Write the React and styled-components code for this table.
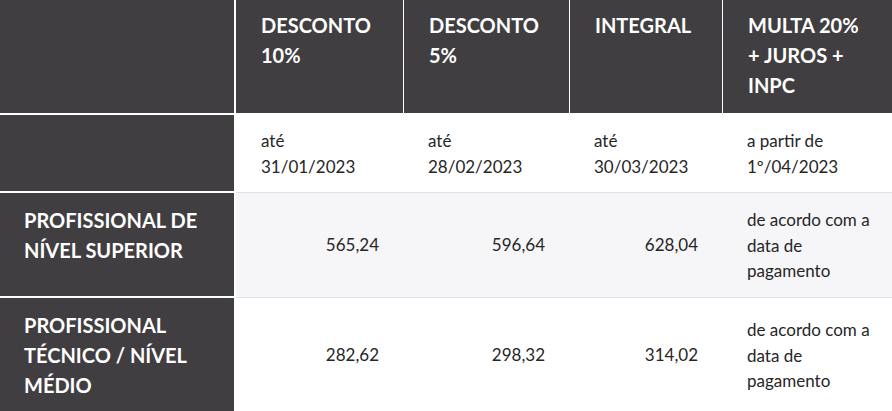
import React from "react";
import styled, { createGlobalStyle } from "styled-components";

const GlobalStyle = createGlobalStyle`
  body {
    margin: 0;
    background: #fff;
    font-family: Lato, "Open Sans", "Liberation Sans", sans-serif;
  }
`;

const DARK = "#403e41";

const widths = [236, 167, 166, 153, 170];

const columns = [
  { title: "DESCONTO 10%", date: ["até", "31/01/2023"] },
  { title: "DESCONTO 5%", date: ["até", "28/02/2023"] },
  { title: "INTEGRAL", date: ["até", "30/03/2023"] },
  { title: "MULTA 20% + JUROS + INPC", date: ["a partir de", "1º/04/2023"] },
];

const rows = [
  {
    label: "PROFISSIONAL DE NÍVEL SUPERIOR",
    values: ["565,24", "596,64", "628,04"],
    shade: true,
  },
  {
    label: "PROFISSIONAL TÉCNICO / NÍVEL MÉDIO",
    values: ["282,62", "298,32", "314,02"],
    shade: false,
  },
];

export default function App() {
  return (
    <>
      <GlobalStyle />
      <PriceTable>
        <colgroup>
          {widths.map((w, i) => (
            <Col key={i} $w={w} />
          ))}
        </colgroup>
        <thead>
          <tr>
            <CornerCell />
            {columns.map((c, i) => (
              <HeadCell key={c.title} $first={i === 0} $last={i === columns.length - 1}>
                {c.title}
              </HeadCell>
            ))}
          </tr>
        </thead>
        <tbody>
          <tr>
            <LabelCell />
            {columns.map((c, i) => (
              <DateCell key={c.date[1]} $last={i === columns.length - 1}>
                {c.date[0]}
                <br />
                {c.date[1]}
              </DateCell>
            ))}
          </tr>
          {rows.map((r) => (
            <tr key={r.label}>
              <LabelCell>{r.label}</LabelCell>
              {r.values.map((v) => (
                <ValueCell key={v} $shade={r.shade}>
                  {v}
                </ValueCell>
              ))}
              <NoteCell $shade={r.shade}>de acordo com a data de pagamento</NoteCell>
            </tr>
          ))}
        </tbody>
      </PriceTable>
    </>
  );
}

const PriceTable = styled.table`
  width: 892px;
  table-layout: fixed;
  border-collapse: separate;
  border-spacing: 0;
`;

const Col = styled.col`
  width: ${(p) => p.$w}px;
`;

const CornerCell = styled.th`
  background: ${DARK};
  border-right: 2px solid #fff;
  border-bottom: 2px solid #fff;
  padding: 0;
`;

const HeadCell = styled.th`
  background: ${DARK};
  color: #fff;
  font-weight: 700;
  font-size: 20px;
  line-height: 30px;
  text-align: left;
  vertical-align: top;
  padding: 10px ${(p) => (p.$last ? "21px" : "24px")} 13px 25px;
  border-left: ${(p) => (p.$first ? "none" : "1px solid #fff")};
  border-bottom: 2px solid #fff;
`;

const LabelCell = styled.th`
  background: ${DARK};
  color: #fff;
  font-weight: 700;
  font-size: 20px;
  line-height: 30px;
  text-align: left;
  vertical-align: top;
  padding: 12px 24px 12px 24px;
  border-right: 2px solid #fff;
  border-bottom: 2px solid #fff;
`;

const BodyCell = styled.td`
  color: #262626;
  font-size: 17px;
  line-height: 25.5px;
  background: ${(p) => (p.$shade ? "#f6f5f8" : "#fff")};
  border-bottom: 1px solid #e2e1e5;
`;

const DateCell = styled(BodyCell)`
  text-align: left;
  vertical-align: middle;
  padding: 13px ${(p) => (p.$last ? "18px" : "24px")} 13px 25px;
`;

const ValueCell = styled(BodyCell)`
  text-align: right;
  vertical-align: middle;
  padding: 0 24px 0 25px;
`;

const NoteCell = styled(BodyCell)`
  text-align: left;
  vertical-align: middle;
  padding: 14px 18px 13px 25px;
`;
